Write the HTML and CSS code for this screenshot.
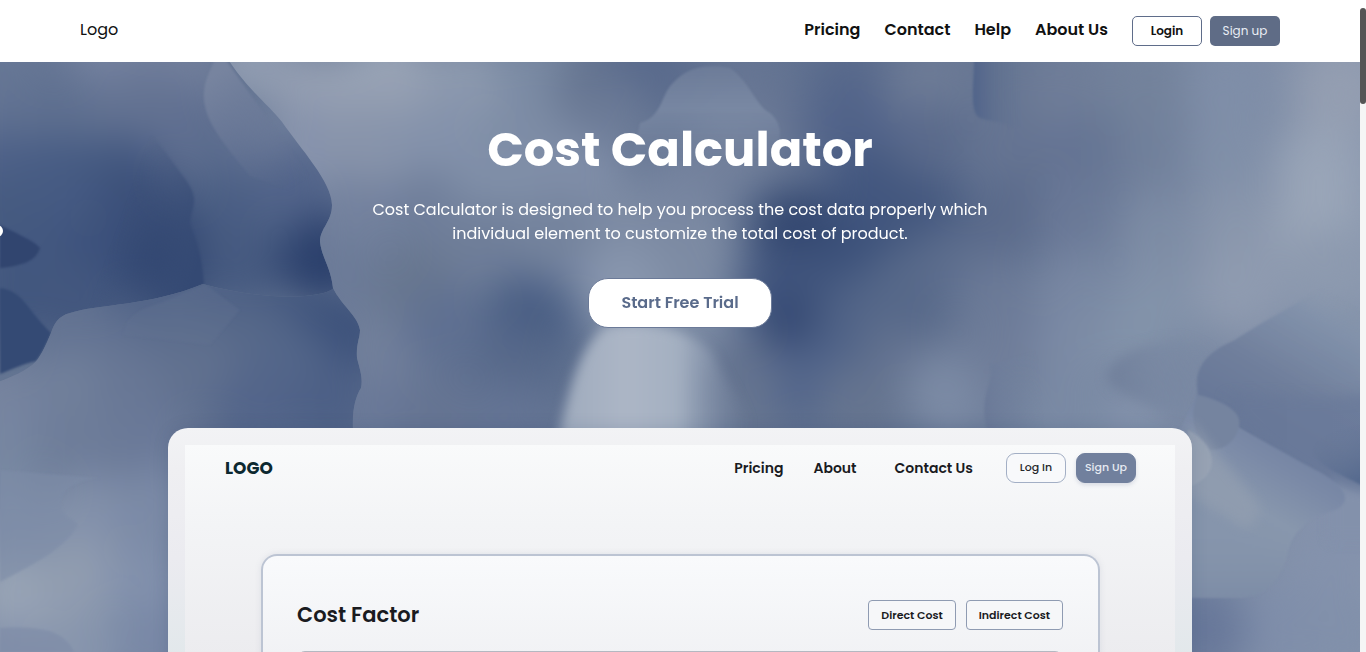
FILE: index.html
```html
<!DOCTYPE html>
<html lang="en">
<head>
<meta charset="utf-8">
<meta name="viewport" content="width=device-width, initial-scale=1">
<title>Cost Calculator</title>
<link rel="stylesheet" href="styles.css">
</head>
<body>
<div class="shell">
<div class="page">
  <header class="topbar">
    <a class="brand" href="#">Logo</a>
    <nav class="topnav">
      <a href="#pricing">Pricing</a>
      <a href="#contact">Contact</a>
      <a href="#help">Help</a>
      <a href="#about">About Us</a>
    </nav>
    <div class="auth">
      <button class="btn btn-login" type="button">Login</button>
      <button class="btn btn-signup" type="button">Sign up</button>
    </div>
  </header>

  <main class="hero">
    <svg class="backdrop" viewBox="0 62 1360 590" preserveAspectRatio="xMidYMin slice" aria-hidden="true">
      <defs>
        <filter id="soft" color-interpolation-filters="sRGB" filterUnits="userSpaceOnUse" x="-100" y="-60" width="1560" height="840"><feGaussianBlur stdDeviation="20"/></filter>
        <filter id="mid" color-interpolation-filters="sRGB" filterUnits="userSpaceOnUse" x="-100" y="-60" width="1560" height="840"><feGaussianBlur stdDeviation="6"/></filter>
        <filter id="edge" color-interpolation-filters="sRGB" filterUnits="userSpaceOnUse" x="-100" y="-60" width="1560" height="840"><feGaussianBlur stdDeviation="1"/></filter>
        <linearGradient id="base" x1="0" x2="1" y1="0" y2="0"><stop offset="0" stop-color="#657693"/><stop offset=".6" stop-color="#627391"/><stop offset="1" stop-color="#8c99b0"/></linearGradient>
        <clipPath id="cRight"><path d="M222 50C245 88 268 104 282 122C300 148 332 182 332 205C332 222 320 228 320 242C322 258 331 268 333 288C342 306 358 316 360 330C360 338 356 344 357 358C360 370 363 378 361 388C356 396 352 408 353 430V700H1400V40Z"/></clipPath>
        <clipPath id="cLow"><path d="M-20 388C6 380 30 370 38 359C44 350 48 340 51 333C54 324 58 316 70 313C98 304 150 306 203 284C260 300 320 300 334 288L400 380V700H-20Z"/></clipPath>
        <linearGradient id="g1" gradientUnits="userSpaceOnUse" x1="204" y1="250" x2="120" y2="220"><stop stop-color="#344973"/><stop offset="1" stop-color="#3c5079" stop-opacity="0"/></linearGradient>
        <linearGradient id="g2" gradientUnits="userSpaceOnUse" x1="215" y1="75" x2="290" y2="190"><stop stop-color="#77849f"/><stop offset=".4" stop-color="#6d7b99" stop-opacity=".7"/><stop offset="1" stop-color="#5d6d8f" stop-opacity="0"/></linearGradient>
        <linearGradient id="g3" gradientUnits="userSpaceOnUse" x1="1215" y1="400" x2="1290" y2="270"><stop stop-color="#687898"/><stop offset=".35" stop-color="#707f9c"/><stop offset=".8" stop-color="#8191aa" stop-opacity=".9"/><stop offset="1" stop-color="#8b99ae" stop-opacity="0"/></linearGradient>
        <linearGradient id="g4" gradientUnits="userSpaceOnUse" x1="60" y1="500" x2="110" y2="560"><stop stop-color="#7f8ea8"/><stop offset="1" stop-color="#7f8ea8" stop-opacity="0"/></linearGradient>
        <linearGradient id="g5" gradientUnits="userSpaceOnUse" x1="1110" y1="370" x2="1215" y2="360"><stop stop-color="#71809b"/><stop offset="1" stop-color="#7a89a4" stop-opacity="0"/></linearGradient>
        <linearGradient id="g6" gradientUnits="userSpaceOnUse" x1="974" y1="90" x2="1020" y2="90"><stop stop-color="#52658a"/><stop offset="1" stop-color="#637493" stop-opacity="0"/></linearGradient>
        <linearGradient id="g7" gradientUnits="userSpaceOnUse" x1="985" y1="390" x2="1040" y2="385"><stop stop-color="#6b7a98"/><stop offset="1" stop-color="#7686a1" stop-opacity="0"/></linearGradient>
        <linearGradient id="g8" gradientUnits="userSpaceOnUse" x1="700" y1="65" x2="700" y2="160"><stop stop-color="#6f7e9a"/><stop offset=".45" stop-color="#7d8ca6"/><stop offset="1" stop-color="#7d8ca6" stop-opacity="0"/></linearGradient>
        <linearGradient id="g9" gradientUnits="userSpaceOnUse" x1="1300" y1="430" x2="1235" y2="540"><stop stop-color="#7080a0"/><stop offset=".35" stop-color="#7b8aa7"/><stop offset=".7" stop-color="#8897ad"/><stop offset="1" stop-color="#8695ac"/></linearGradient>
        <linearGradient id="g10" gradientUnits="userSpaceOnUse" x1="560" y1="0" x2="750" y2="0"><stop stop-color="#9fabbd"/><stop offset=".35" stop-color="#acb6c6"/><stop offset=".62" stop-color="#a4b0c1"/><stop offset="1" stop-color="#8391aa" stop-opacity="0"/></linearGradient>
        <linearGradient id="g11" gradientUnits="userSpaceOnUse" x1="0" y1="595" x2="0" y2="530"><stop stop-color="#7888a3"/><stop offset="1" stop-color="#8594ab" stop-opacity="0"/></linearGradient>
        <linearGradient id="g12" gradientUnits="userSpaceOnUse" x1="1230" y1="0" x2="1330" y2="0"><stop stop-color="#677797"/><stop offset="1" stop-color="#6a7a9a"/></linearGradient>
        <linearGradient id="g13" gradientUnits="userSpaceOnUse" x1="1360" y1="480" x2="1335" y2="425"><stop stop-color="#566a8e"/><stop offset="1" stop-color="#6a7a99" stop-opacity="0"/></linearGradient>
      </defs>
      <rect x="-20" y="40" width="1400" height="640" fill="url(#base)"/>

      <!-- left folds -->
      <g class="blobs" filter="url(#soft)">
        <circle cx="0" cy="60" fill="#687896"/><circle cx="110" cy="62" fill="#7683a0"/><circle cx="180" cy="75" fill="#73809c"/>
        <circle cx="0" cy="120" fill="#637493"/><circle cx="60" cy="115" fill="#5f7090"/><circle cx="140" cy="115" fill="#647392"/><circle cx="190" cy="130" fill="#617091"/>
        <circle cx="230" cy="160" fill="#5b6c8e"/><circle cx="290" cy="130" fill="#6e7d9a"/>
        <circle cx="0" cy="175" fill="#4e6188"/><circle cx="60" cy="180" fill="#475c84"/><circle cx="120" cy="180" fill="#435880"/><circle cx="145" cy="215" fill="#3b4f78"/>
        <circle cx="230" cy="215" fill="#4b5f84"/><circle cx="300" cy="190" fill="#52648a"/>
        <circle cx="0" cy="225" fill="#465b80"/><circle cx="50" cy="250" fill="#435880"/><circle cx="110" cy="260" fill="#3c517b"/><circle cx="172" cy="265" fill="#2f446f"/>
        <circle cx="240" cy="265" fill="#465a80"/><circle cx="325" cy="260" fill="#2b406c"/><circle cx="10" cy="300" fill="#42577e"/><circle cx="80" cy="310" fill="#43577e"/>
      </g>
      <g filter="url(#edge)">
        <path d="M217 55C206 78 203 86 204 100C206 122 222 142 250 176L330 205L222 55Z" fill="url(#g2)"/>
        <path d="M150 134C165 150 178 170 186 180C200 200 192 206 190 222C194 238 201 246 204 284C170 300 140 306 90 306L90 180Z" fill="url(#g1)"/>
        <path d="M0 225C18 234 36 242 40 248C36 262 20 266 0 268Z" fill="#31456f"/>
        <path d="M0 288C24 292 24 306 51 333C44 350 40 356 36 361C22 364 10 370 0 374Z" fill="#344a74"/>
      </g>
      <g clip-path="url(#cLow)">
        <rect x="-20" y="270" width="430" height="400" fill="#63738f"/>
        <g class="blobs" filter="url(#soft)">
          <circle cx="220" cy="300" fill="#4d6085"/><circle cx="140" cy="305" fill="#4e6186"/><circle cx="60" cy="335" fill="#637392"/><circle cx="290" cy="300" fill="#465a80"/>
          <circle cx="100" cy="350" fill="#637392"/><circle cx="180" cy="345" fill="#5b6c8c"/><circle cx="250" cy="345" fill="#566889"/><circle cx="345" cy="335" fill="#3d527b"/>
          <circle cx="0" cy="400" fill="#77849f"/><circle cx="70" cy="395" fill="#71809b"/><circle cx="140" cy="395" fill="#687795"/><circle cx="205" cy="385" fill="#61718f"/>
          <circle cx="290" cy="375" fill="#54678a"/><circle cx="260" cy="410" fill="#53658a"/><circle cx="335" cy="405" fill="#4d6086"/>
          <circle cx="0" cy="460" fill="#7787a1"/><circle cx="80" cy="450" fill="#6e7d99"/><circle cx="150" cy="450" fill="#6a7998"/>
          <circle cx="10" cy="530" fill="#8190aa"/><circle cx="90" cy="520" fill="#8391aa"/><circle cx="160" cy="510" fill="#7b8aa6"/>
          <circle cx="10" cy="600" fill="#99a5b6"/><circle cx="80" cy="585" fill="#919db0"/><circle cx="150" cy="590" fill="#8190ac"/>
          <circle cx="0" cy="665" fill="#8592ac"/><circle cx="80" cy="660" fill="#8795ad"/><circle cx="160" cy="650" fill="#7988a6"/>
        </g>
        <path d="M0 582C30 566 64 550 78 525C72 516 60 518 61 500C64 488 80 480 100 478L0 470Z" fill="#7d8ca7" opacity=".6" filter="url(#edge)"/>
        <path d="M0 628C40 626 64 630 74 652H0Z" fill="#7d8ba7" opacity=".6" filter="url(#edge)"/>
        <path d="M123 335C126 318 136 310 160 303L205 284L240 310L210 345Z" fill="#647493" opacity=".3" filter="url(#edge)"/>
      </g>

      <!-- centre and right folds -->
      <g clip-path="url(#cRight)">
        <rect x="200" y="40" width="1200" height="640" fill="url(#base)"/>
        <g class="blobs" filter="url(#soft)">
          <circle cx="250" cy="60" fill="#8f9bb0"/><circle cx="320" cy="95" fill="#959fb2"/><circle cx="390" cy="75" fill="#9aa6b8"/><circle cx="400" cy="105" fill="#97a1b3"/><circle cx="470" cy="80" fill="#8c99ae"/>
          <circle cx="540" cy="80" fill="#7b8ba4"/><circle cx="300" cy="150" fill="#8793ac"/><circle cx="370" cy="150" fill="#8894ab"/><circle cx="440" cy="145" fill="#8492ab"/>
          <circle cx="530" cy="145" fill="#7d8ca5"/><circle cx="600" cy="90" fill="#65748f"/><circle cx="650" cy="75" fill="#596a8c"/><circle cx="610" cy="125" fill="#6b7a96"/>
          <circle cx="350" cy="220" fill="#74829e"/><circle cx="430" cy="215" fill="#6f7e9a"/><circle cx="500" cy="190" fill="#808fa8"/><circle cx="580" cy="180" fill="#808ea8"/>
          <circle cx="340" cy="280" fill="#6c7b98"/><circle cx="420" cy="290" fill="#68778f"/><circle cx="490" cy="250" fill="#6f7e99"/>
          <circle cx="380" cy="360" fill="#72809b"/><circle cx="450" cy="330" fill="#5f7091"/><circle cx="535" cy="315" fill="#485d83"/><circle cx="520" cy="370" fill="#566889"/>
          <circle cx="370" cy="420" fill="#6a7998"/><circle cx="440" cy="420" fill="#657492"/><circle cx="510" cy="425" fill="#647494"/>
          <circle cx="560" cy="240" fill="#74839d"/><circle cx="640" cy="230" fill="#7d8ba3"/><circle cx="690" cy="190" fill="#7785a0"/><circle cx="620" cy="290" fill="#8896ae"/><circle cx="650" cy="330" fill="#8a98ae"/>
          <circle cx="700" cy="260" fill="#7d8ba3"/><circle cx="700" cy="320" fill="#7d8ca5"/><circle cx="740" cy="90" fill="#667593"/><circle cx="790" cy="130" fill="#657492"/><circle cx="850" cy="80" fill="#596a8c"/>
          <circle cx="730" cy="150" fill="#72809b"/><circle cx="850" cy="130" fill="#516389"/><circle cx="930" cy="85" fill="#6d7b96"/><circle cx="930" cy="150" fill="#5a6a8b"/><circle cx="870" cy="195" fill="#43577f"/>
          <circle cx="795" cy="235" fill="#32466f"/><circle cx="860" cy="260" fill="#3c517a"/><circle cx="930" cy="225" fill="#43577e"/><circle cx="780" cy="290" fill="#41557d"/>
          <circle cx="800" cy="340" fill="#344872"/><circle cx="860" cy="320" fill="#4f6286"/><circle cx="745" cy="380" fill="#62718e"/><circle cx="760" cy="415" fill="#667590"/>
          <circle cx="820" cy="385" fill="#51648a"/><circle cx="860" cy="410" fill="#65748f"/><circle cx="910" cy="340" fill="#647390"/><circle cx="910" cy="290" fill="#566889"/><circle cx="960" cy="265" fill="#5b6c8c"/>
          <circle cx="1010" cy="85" fill="#667592"/><circle cx="1070" cy="90" fill="#6f7d98"/><circle cx="1010" cy="155" fill="#657492"/><circle cx="1090" cy="160" fill="#657493"/>
          <circle cx="1010" cy="220" fill="#5b6b8b"/><circle cx="1080" cy="225" fill="#6a7997"/><circle cx="1150" cy="90" fill="#73829b"/><circle cx="1230" cy="90" fill="#7f8ea8"/>
          <circle cx="1340" cy="90" fill="#949eb1"/><circle cx="1160" cy="160" fill="#71809b"/><circle cx="1230" cy="160" fill="#808fa8"/><circle cx="1320" cy="170" fill="#98a4b7"/>
          <circle cx="1160" cy="235" fill="#7c8ba4"/><circle cx="1240" cy="230" fill="#8996ac"/><circle cx="1320" cy="230" fill="#9ba7b9"/>
          <circle cx="1000" cy="300" fill="#6b7a97"/><circle cx="1080" cy="295" fill="#7887a2"/><circle cx="1160" cy="295" fill="#8190a8"/><circle cx="1240" cy="290" fill="#8f9bb0"/><circle cx="1330" cy="270" fill="#8d9aaf"/>
          <circle cx="950" cy="395" fill="#7c8ba5"/><circle cx="1010" cy="360" fill="#6f7d99"/><circle cx="1080" cy="350" fill="#7c8ba5"/><circle cx="1060" cy="420" fill="#7a8aa4"/>
          <circle cx="1150" cy="335" fill="#8393aa"/><circle cx="1150" cy="425" fill="#8493ac"/><circle cx="1190" cy="385" fill="#7a89a3"/>
          <circle cx="1340" cy="360" fill="#7e8ea7"/><circle cx="1350" cy="520" fill="#8391ac"/><circle cx="1330" cy="580" fill="#8492ac"/><circle cx="1280" cy="630" fill="#7f8eaa"/><circle cx="1200" cy="630" fill="#677799"/><circle cx="1350" cy="640" fill="#8190aa"/>
        </g>
        <g filter="url(#edge)">
          <path d="M640 123C664 116 660 94 674 82C688 66 710 64 730 68C750 82 756 106 770 113C790 130 780 160 740 170H630Z" fill="url(#g8)" opacity=".8"/>
          <path d="M974 50C975 80 968 112 980 118C990 122 1004 120 1010 128L1060 120V50Z" fill="url(#g6)"/>
          <path d="M990 365C996 380 978 395 987 430H1060V345Z" fill="url(#g7)"/>
        </g>
        <path d="M1180 340C1130 344 1106 364 1107 378C1112 396 1150 398 1190 430L1215 350Z" fill="url(#g5)" filter="url(#mid)"/>
        <g filter="url(#edge)">
          <path d="M1370 262C1320 290 1262 322 1235 340C1206 352 1196 368 1197 385L1198 400L1300 470L1370 500Z" fill="url(#g3)"/>
        </g>
        <g filter="url(#mid)">
          <path d="M1225 398C1250 388 1320 408 1380 390V500L1330 485C1290 460 1250 440 1225 398Z" fill="url(#g12)" opacity=".75"/>
          <path d="M1330 480C1350 492 1370 490 1380 494V540H1330Z" fill="#8391ab"/>
        </g>
        <g filter="url(#edge)">
          <path d="M1197 395C1222 400 1238 412 1239 428C1262 440 1300 462 1320 472C1336 482 1346 490 1345 500C1340 514 1324 510 1310 520C1294 534 1290 540 1287 557C1278 586 1260 598 1237 598H1180V430Z" fill="url(#g9)"/>
          <path d="M1287 557C1278 586 1260 598 1237 598H1180V520H1290Z" fill="url(#g11)" opacity=".6"/>
          <path d="M1196 432C1190 410 1196 400 1198 395C1228 402 1245 414 1238 430C1232 448 1216 450 1210 450Z" fill="#75849f"/>
          <path d="M1380 422C1336 430 1314 440 1314 454C1322 468 1340 474 1380 494Z" fill="url(#g13)"/>
        </g>
        <path d="M1190 420C1214 452 1240 478 1257 503C1262 516 1256 530 1240 526C1220 510 1196 500 1184 490Z" fill="#929eb0" opacity=".75" filter="url(#mid)"/>
        <path d="M1188 430C1218 446 1222 476 1188 487Z" fill="#9aa5b5" opacity=".75" filter="url(#edge)"/>
        <path d="M556 450C568 396 576 350 606 326C650 318 690 330 712 352C730 390 756 420 760 450Z" fill="url(#g10)" filter="url(#mid)"/>
      </g>
      <circle cx="-3" cy="231" r="6" fill="#fff"/>
    </svg>

    <section class="intro">
      <h1>Cost Calculator</h1>
      <p>Cost Calculator is designed to help you process the cost data properly which individual element to customize the total cost of product.</p>
      <button class="trial" type="button">Start Free Trial</button>
    </section>

    <section class="preview" aria-label="Product preview">
      <div class="screen">
        <div class="screen-bar">
          <span class="screen-logo">LOGO</span>
          <nav class="screen-nav">
            <a href="#pricing">Pricing</a>
            <a href="#about">About</a>
            <a class="wide" href="#contact">Contact Us</a>
          </nav>
          <button class="pill" type="button">Log In</button>
          <button class="pill pill-solid" type="button">Sign Up</button>
        </div>
        <div class="panel">
          <div class="panel-head">
            <h2>Cost Factor</h2>
            <button class="tag" type="button">Direct Cost</button>
            <button class="tag" type="button">Indirect Cost</button>
          </div>
          <div class="sheet"></div>
        </div>
      </div>
    </section>
  </main>
</div>
<div class="rail" aria-hidden="true"><div class="thumb"></div></div>
</div>
</body>
</html>
```
FILE: styles.css
```css
* { box-sizing: border-box; }
body {
  margin: 0;
  font-family: Poppins, Inter, "Open Sans", sans-serif;
  font-size: 16px;
  color: #111;
  background: #fff;
}
a { color: inherit; text-decoration: none; }
button { font-family: inherit; padding: 0; cursor: pointer; }

.shell { display: flex; height: 100vh; overflow: hidden; }
.page { flex: 1; min-width: 0; overflow-y: auto; scrollbar-width: none; }
.rail { width: 6px; padding: 8px 0; background: linear-gradient(#fff 62px, #f5f5f5 62px); }
.thumb { height: 96px; border-radius: 3px; background: #555; }

.topbar {
  display: flex;
  align-items: center;
  height: 62px;
  padding: 0 80px;
  background: #fff;
}
.brand { margin-right: auto; line-height: 24px; padding-bottom: 2px; }
.topnav { display: flex; gap: 24px; font-weight: 600; line-height: 24px; padding-bottom: 2px; }
.auth { display: flex; gap: 8px; margin-left: 24px; padding-bottom: 1px; }
.btn { width: 70px; height: 30px; border-radius: 5px; font-size: 12px; }
.btn-login { border: 1px solid #5f6d8a; background: #fff; color: #111; font-weight: 600; }
.btn-signup { border: 0; background: #5f6c86; color: #e9edf4; }

.hero { position: relative; overflow: hidden; min-height: 590px; }
.backdrop { position: absolute; inset: 0; width: 100%; height: 590px; min-height: calc(100vh - 62px); display: block; }
.blobs circle { r: 46px; }

.intro {
  position: relative;
  display: flex;
  flex-direction: column;
  align-items: center;
  padding: 58px 20px 0;
  text-align: center;
  color: #fff;
}
.intro h1 { margin: 0; font-size: 48px; line-height: 60px; font-weight: 700; }
.intro p { margin: 18px 0 0; max-width: 640px; font-size: 16px; line-height: 24px; }
.trial {
  margin-top: 32px;
  width: 184px;
  height: 50px;
  padding-bottom: 2px;
  border: 1px solid #6b7a98;
  border-radius: 20px;
  background: #fff;
  color: #5a6b8b;
  font-size: 16px;
  font-weight: 600;
}

.preview {
  position: relative;
  width: 1024px;
  max-width: 94%;
  margin: 100px auto 0;
  padding: 17px 17px 0;
  border-radius: 20px 20px 0 0;
  background: linear-gradient(#f2f3f5, #efeff2 40px, #ebebf0 130px, #e2e8eb 230px);
  box-shadow: 0 0 16px rgba(40, 60, 100, .15);
}
.screen { padding: 0 39px 0 40px; background: linear-gradient(#f9fafb, #f3f4f6 80px, #ececef 210px); }
.screen-bar { display: flex; align-items: center; height: 45px; font-size: 14px; }
.screen-logo { margin-right: auto; font-size: 17px; font-weight: 700; color: #0c2830; }
.screen-nav { display: flex; gap: 30px; margin-right: 33px; padding-top: 2px; font-weight: 600; color: #1a1b1f; }
.screen-nav .wide { margin-left: 8px; }
.pill {
  width: 60px;
  height: 30px;
  border: 1px solid #a3afc5;
  border-radius: 9px;
  background: #f8f9fb;
  color: #26272b;
  font-size: 11px;
  font-weight: 500;
}
.pill-solid { margin-left: 10px; border-color: #71809d; background: #71809d; color: #e6eaf2; box-shadow: 0 2px 4px rgba(90, 105, 140, .2); }
.panel {
  margin: 64px 36px 0;
  padding: 44px 35px 0 34px;
  border: 2px solid #bcc4d3;
  border-bottom: 0;
  border-radius: 16px 16px 0 0;
  background: linear-gradient(#f9fafc, #f0f1f4 110px);
  box-shadow: 0 0 6px rgba(120, 130, 155, .15);
}
.panel-head { display: flex; align-items: center; gap: 10px; height: 30px; }
.panel-head h2 { margin: 0 auto 0 0; font-size: 21px; line-height: 30px; font-weight: 600; color: #1a1b1f; }
.tag {
  height: 30px;
  padding: 0 12px;
  border: 1px solid #8f9bb2;
  border-radius: 4px;
  background: #f6f7f9;
  color: #1a1b1f;
  font-size: 11px;
  font-weight: 600;
}
.sheet { height: 240px; margin-top: 21px; border: 1px solid #b4b8c1; border-radius: 8px; }
```
